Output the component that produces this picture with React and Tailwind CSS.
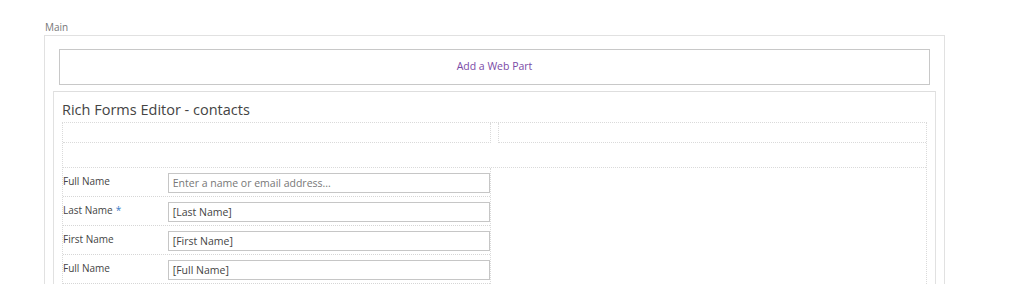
import React from "react";

const rows = [
  { label: "Full Name", value: "Enter a name or email address...", placeholder: true },
  { label: "Last Name", value: "[Last Name]", required: true },
  { label: "First Name", value: "[First Name]" },
  { label: "Full Name", value: "[Full Name]" },
];

const FormRow = ({ label, value, placeholder, required }) => (
  <div className="flex h-[29px] items-start border-b border-dotted border-[#d6d6d6]">
    <div className="w-[105px] pt-[6px] text-[10px] leading-[14px] text-[#444]">
      {label}
      {required && <span className="ml-[3px] text-[#3a7bc8]">*</span>}
    </div>
    <div className="mt-[5px] flex h-[20px] w-[323px] items-center border border-[#c6c6c6] px-[4px]">
      <span className={`text-[10.5px] leading-[14px] ${placeholder ? "text-[#777]" : "text-[#444]"}`}>{value}</span>
    </div>
  </div>
);

const App = () => {
  return (
    <div className="h-[284px] w-[1012px] overflow-hidden bg-white pl-[44px] pt-[20px]" style={{ fontFamily: '"Open Sans", "Noto Sans", sans-serif' }}>
      <div className="h-[15px] pl-[1px] text-[10px] leading-[15px] text-[#777]">Main</div>
      <div className="w-[901px] border border-[#e1e1e1] pl-[14px] pr-[14px] pt-[13px]">
        {/* add web part zone */}
        <div className="flex h-[36px] items-center justify-center border border-[#c8c8c8]">
          <span className="text-[10.5px] text-[#7a4aa6]">Add a Web Part</span>
        </div>

        {/* web part */}
        <div className="-mx-[6px] mt-[6px] border border-t-[#dedede] border-x-[#e1e1e1] border-b-0 px-[8px] pb-[20px]">
          <div className="h-[30px] pt-[8px] text-[14.5px] leading-[20px] text-[#444]">Rich Forms Editor - contacts</div>
          <div className="border-x border-t border-dotted border-[#dadada]">
            <div className="flex h-[20px] justify-between">
              <div className="w-[428px] border-b border-r border-dotted border-[#dadada]"></div>
              <div className="w-[428px] border-b border-l border-dotted border-[#dadada]"></div>
            </div>
            <div className="h-[25px] border-b border-dotted border-[#dadada]"></div>
            <div className="w-[428px] border-r border-dotted border-[#dadada]">
              {rows.map((r, i) => (
                <FormRow key={i} {...r} />
              ))}
            </div>
          </div>
        </div>
      </div>
    </div>
  );
};

export default App;
